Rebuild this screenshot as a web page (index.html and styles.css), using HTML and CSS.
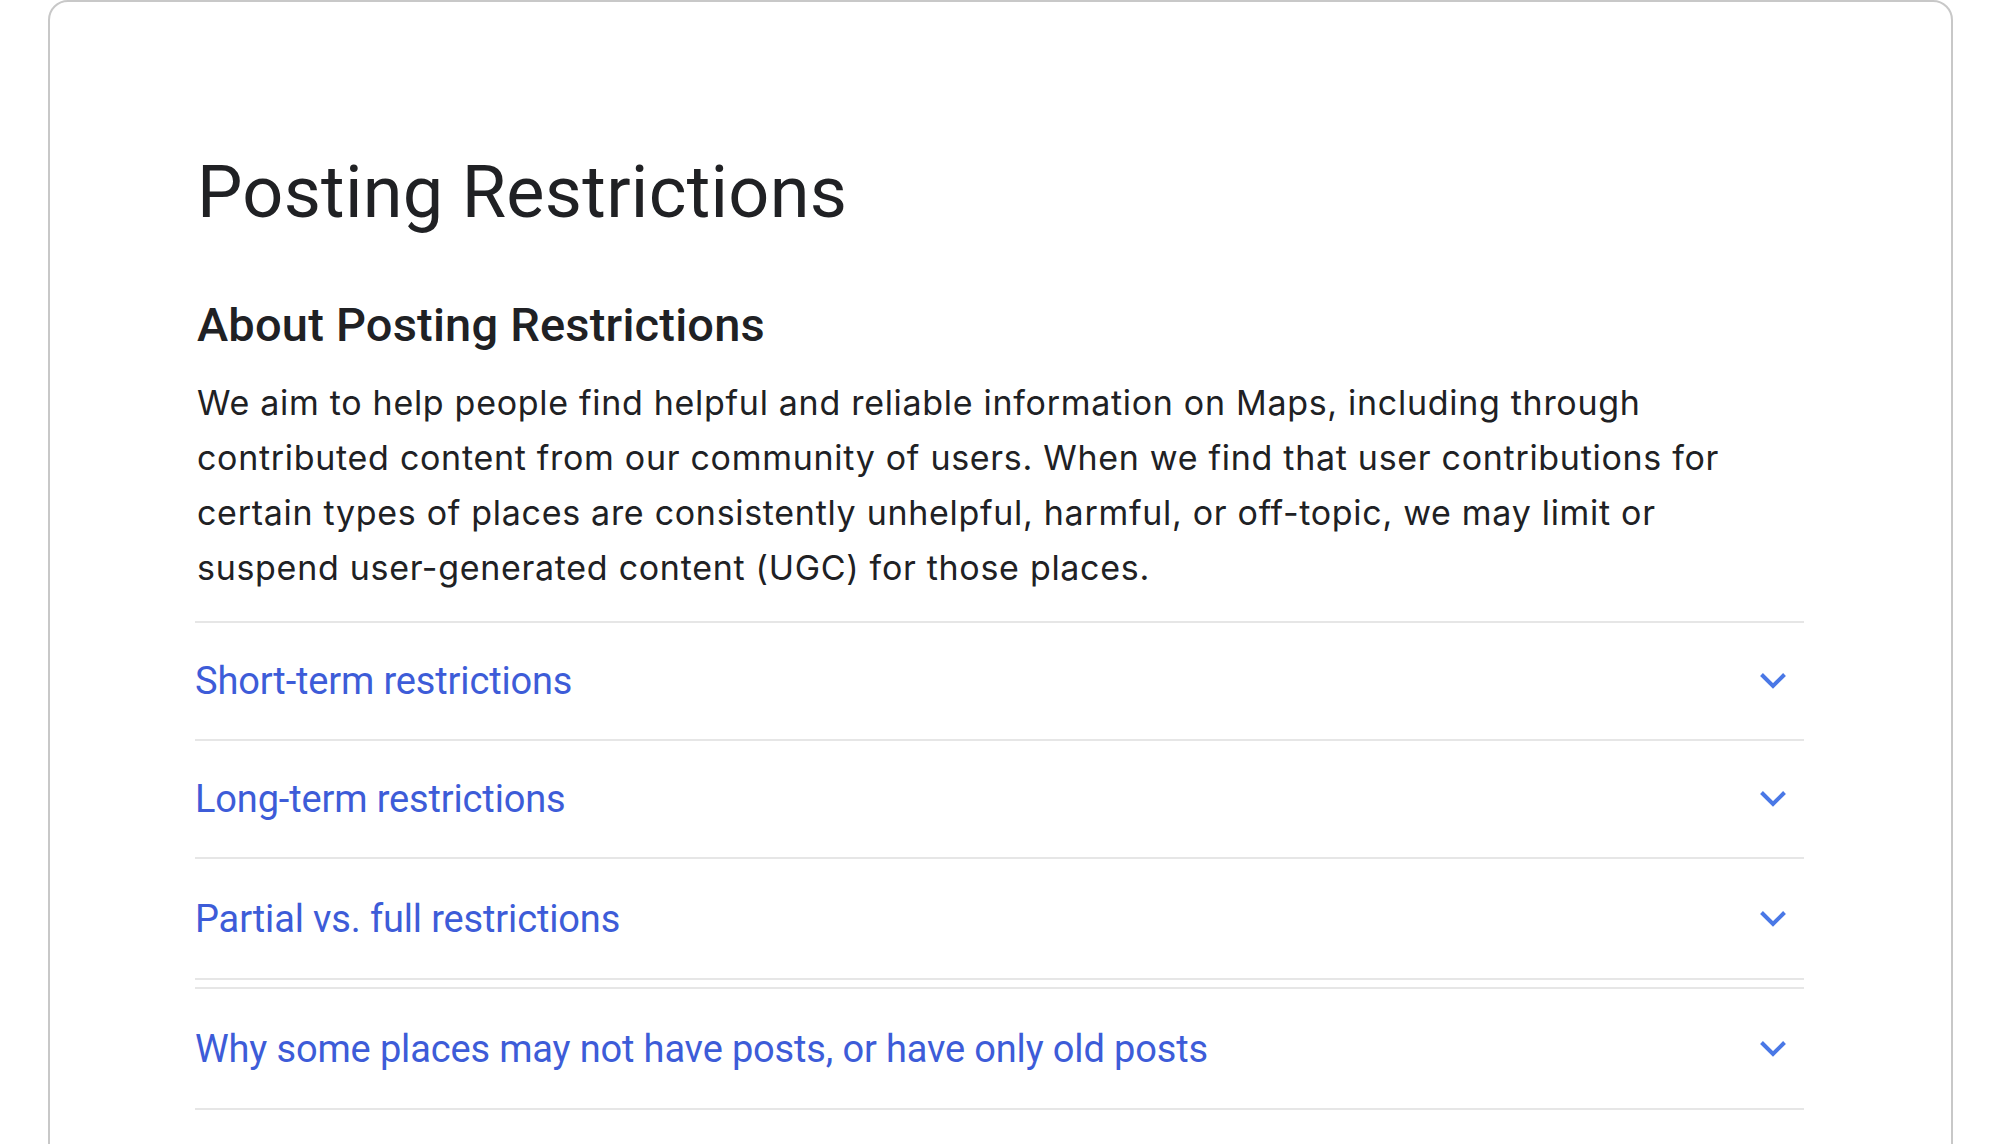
FILE: index.html
```html
<!DOCTYPE html>
<html lang="en">
<head>
<meta charset="utf-8">
<title>Posting Restrictions</title>
<link rel="stylesheet" href="styles.css">
</head>
<body>
<main class="card">
  <h1 class="title">Posting Restrictions</h1>
  <h2 class="subtitle">About Posting Restrictions</h2>
  <p class="intro">We aim to help people find helpful and reliable information on Maps, including through contributed content from our community of users. When we find that user contributions for certain types of places are consistently unhelpful, harmful, or off-topic, we may limit or suspend user-generated content (UGC) for those places.</p>

  <div class="accordion">
    <div class="acc-item">
      <span class="acc-label">Short-term restrictions</span>
      <svg class="chev" viewBox="0 0 28 18" width="28" height="18"><polyline points="2.5,2.5 14,14 25.5,2.5"/></svg>
    </div>
    <div class="acc-item">
      <span class="acc-label">Long-term restrictions</span>
      <svg class="chev" viewBox="0 0 28 18" width="28" height="18"><polyline points="2.5,2.5 14,14 25.5,2.5"/></svg>
    </div>
    <div class="acc-item tall">
      <span class="acc-label">Partial vs. full restrictions</span>
      <svg class="chev" viewBox="0 0 28 18" width="28" height="18"><polyline points="2.5,2.5 14,14 25.5,2.5"/></svg>
    </div>
  </div>

  <div class="accordion second">
    <div class="acc-item tall">
      <span class="acc-label">Why some places may not have posts, or have only old posts</span>
      <svg class="chev" viewBox="0 0 28 18" width="28" height="18"><polyline points="2.5,2.5 14,14 25.5,2.5"/></svg>
    </div>
  </div>
</main>
</body>
</html>
```

FILE: styles.css
```css
html, body {
  margin: 0;
  padding: 0;
  background: #ffffff;
}

body {
  font-family: Roboto, "Liberation Sans", Arial, sans-serif;
  color: #202124;
  height: 1144px;
  overflow: hidden;
}

.card {
  margin: 0 46px 0 48px;
  border: 2px solid #c8c8c8;
  border-radius: 20px;
  padding: 148px 147px 60px 147px;
  min-height: 1200px;
  box-sizing: border-box;
}

.title {
  margin: 0;
  font-size: 72px;
  line-height: 86px;
  font-weight: 400;
  letter-spacing: 0.3px;
  color: #202124;
}

.subtitle {
  margin: 61px 0 0 0;
  font-size: 47px;
  line-height: 56px;
  font-weight: 500;
  letter-spacing: 0.2px;
  color: #202124;
}

.intro {
  margin: 22px 0 0 0;
  max-width: 1555px;
  font-family: Inter, Roboto, "Liberation Sans", sans-serif;
  font-size: 34px;
  line-height: 55px;
  letter-spacing: 0.7px;
  color: #202124;
}

.accordion {
  margin-top: 26px;
  border-top: 2px solid #e6e6e6;
  margin-left: -2px;
}

.accordion.second {
  margin-top: 7px;
}

.acc-item {
  height: 116px;
  display: flex;
  align-items: center;
  justify-content: space-between;
  border-bottom: 2px solid #e6e6e6;
  padding-right: 17px;
}

.acc-item.tall {
  height: 119px;
}

.acc-label {
  font-size: 38px;
  line-height: 46px;
  letter-spacing: -0.15px;
  color: #3d5cd8;
}

.chev {
  display: block;
  fill: none;
  stroke: #4a78e6;
  stroke-width: 4;
}
```
